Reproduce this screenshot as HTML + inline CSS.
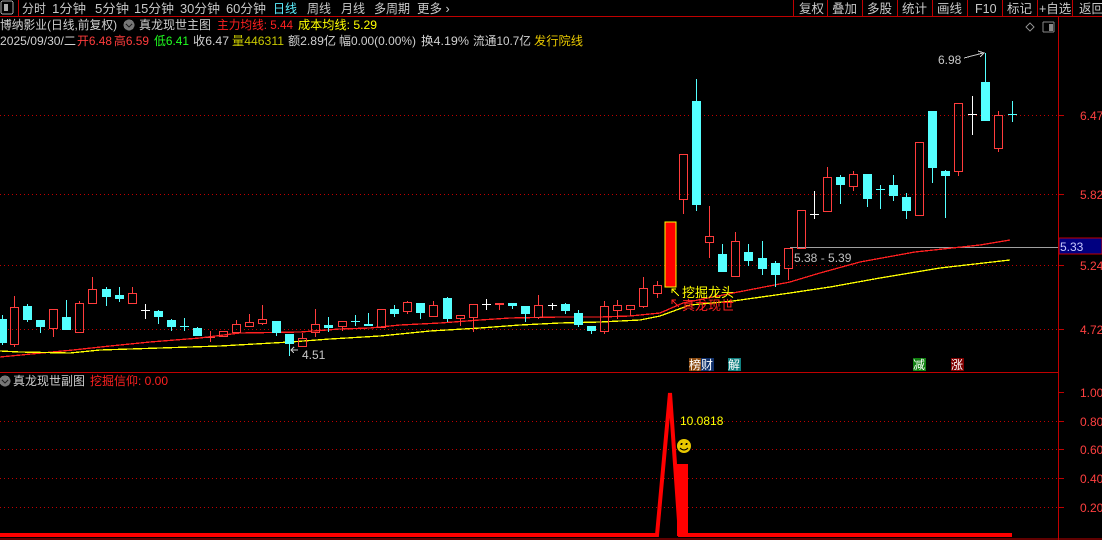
<!DOCTYPE html>
<html><head><meta charset="utf-8">
<style>
html,body{margin:0;padding:0;background:#000;width:1102px;height:540px;overflow:hidden}
svg{display:block}
text{font-family:"Liberation Sans","Noto Sans CJK SC",sans-serif}
</style></head><body>
<svg id="s" width="1102" height="540" xmlns="http://www.w3.org/2000/svg" shape-rendering="crispEdges">
<rect width="1102" height="540" fill="#000"/>
<!-- top menu -->
<line x1="0" y1="16.5" x2="1102" y2="16.5" stroke="#c00000"/>
<rect x="1" y="1" width="12" height="13" rx="2" fill="none" stroke="#aaa"/>
<rect x="4" y="4" width="4" height="7" fill="#aaa"/>
<line x1="18.5" y1="0" x2="18.5" y2="16" stroke="#c00000"/>
<g font-size="12.5" fill="#c8c8c8">
<text x="22" y="13" textLength="24" lengthAdjust="spacingAndGlyphs">分时</text><text x="52" y="13" textLength="34" lengthAdjust="spacingAndGlyphs">1分钟</text><text x="95" y="13" textLength="34" lengthAdjust="spacingAndGlyphs">5分钟</text>
<text x="134" y="13" textLength="40" lengthAdjust="spacingAndGlyphs">15分钟</text><text x="180" y="13" textLength="40" lengthAdjust="spacingAndGlyphs">30分钟</text><text x="226" y="13" textLength="40" lengthAdjust="spacingAndGlyphs">60分钟</text>
<text x="273" y="13" fill="#5cf0ff" textLength="24" lengthAdjust="spacingAndGlyphs">日线</text><text x="307" y="13" textLength="24" lengthAdjust="spacingAndGlyphs">周线</text><text x="341" y="13" textLength="24" lengthAdjust="spacingAndGlyphs">月线</text>
<text x="374" y="13" textLength="36" lengthAdjust="spacingAndGlyphs">多周期</text><text x="417" y="13">更多 ›</text>
<text x="799" y="13">复权</text><text x="832" y="13">叠加</text><text x="867" y="13">多股</text>
<text x="902" y="13">统计</text><text x="937" y="13">画线</text><text x="975" y="13">F10</text>
<text x="1007" y="13">标记</text><text x="1039" y="13">+自选</text><text x="1079" y="13">返回</text>
</g>
<g stroke="#c00000">
<line x1="793.5" y1="0" x2="793.5" y2="16"/><line x1="827.5" y1="0" x2="827.5" y2="16"/><line x1="862.5" y1="0" x2="862.5" y2="16"/><line x1="897.5" y1="0" x2="897.5" y2="16"/><line x1="932.5" y1="0" x2="932.5" y2="16"/><line x1="967.5" y1="0" x2="967.5" y2="16"/><line x1="1002.5" y1="0" x2="1002.5" y2="16"/><line x1="1037.5" y1="0" x2="1037.5" y2="16"/><line x1="1072.5" y1="0" x2="1072.5" y2="16"/>
</g>
<!-- header -->
<g font-size="12">
<text x="0" y="29" fill="#d0d0d0" textLength="117" lengthAdjust="spacingAndGlyphs">博纳影业(日线,前复权)</text>
<circle cx="129" cy="25" r="5.5" fill="#777"/><path d="M126 24l3 3 3-3" stroke="#222" fill="none"/>
<text x="139" y="29" fill="#d0d0d0" textLength="72" lengthAdjust="spacingAndGlyphs">真龙现世主图</text>
<text x="217" y="29" fill="#ff2020" textLength="76" lengthAdjust="spacingAndGlyphs">主力均线: 5.44</text>
<text x="298" y="29" fill="#ffff00" textLength="79" lengthAdjust="spacingAndGlyphs">成本均线: 5.29</text>
<text x="0" y="45" fill="#d0d0d0" textLength="76" lengthAdjust="spacingAndGlyphs">2025/09/30/二</text>
<text x="77" y="45" fill="#ff3c3c" textLength="35" lengthAdjust="spacingAndGlyphs">开6.48</text>
<text x="114" y="45" fill="#ff3c3c" textLength="35" lengthAdjust="spacingAndGlyphs">高6.59</text>
<text x="154" y="45" fill="#20ff20" textLength="35" lengthAdjust="spacingAndGlyphs">低6.41</text>
<text x="193" y="45" fill="#d0d0d0" textLength="36" lengthAdjust="spacingAndGlyphs">收6.47</text>
<text x="232" y="45" fill="#c8c800" textLength="52" lengthAdjust="spacingAndGlyphs">量446311</text>
<text x="288" y="45" fill="#d0d0d0" textLength="48" lengthAdjust="spacingAndGlyphs">额2.89亿</text>
<text x="339" y="45" fill="#d0d0d0" textLength="77" lengthAdjust="spacingAndGlyphs">幅0.00(0.00%)</text>
<text x="421" y="45" fill="#d0d0d0" textLength="48" lengthAdjust="spacingAndGlyphs">换4.19%</text>
<text x="473" y="45" fill="#d0d0d0" textLength="58" lengthAdjust="spacingAndGlyphs">流通10.7亿</text>
<text x="534" y="45" fill="#e8c800" textLength="49" lengthAdjust="spacingAndGlyphs">发行院线</text>
</g>
<path d="M1030 23l4 4-4 4-4-4z" fill="none" stroke="#888"/>
<rect x="1043" y="22" width="11" height="10" rx="1" fill="none" stroke="#888"/><rect x="1049" y="24" width="4" height="7" fill="#888"/>
<!-- axis lines -->
<line x1="1058.5" y1="17" x2="1058.5" y2="540" stroke="#c00000" stroke-width="1"/>
<line x1="0" y1="372.5" x2="1058" y2="372.5" stroke="#c00000"/>
<line x1="0" y1="539" x2="1102" y2="539" stroke="#c00000"/>
<g stroke="#c00000" stroke-dasharray="1 3">
<line x1="0" y1="115.5" x2="1058" y2="115.5"/><line x1="0" y1="194.5" x2="1058" y2="194.5"/>
<line x1="0" y1="265.5" x2="1058" y2="265.5"/><line x1="0" y1="329.5" x2="1058" y2="329.5"/>
<line x1="0" y1="421.5" x2="1058" y2="421.5"/><line x1="0" y1="449.5" x2="1058" y2="449.5"/>
<line x1="0" y1="478.5" x2="1058" y2="478.5"/><line x1="0" y1="507.5" x2="1058" y2="507.5"/>
</g>
<g stroke="#c00000"><line x1="1058" y1="115.5" x2="1064" y2="115.5"/><line x1="1058" y1="194.5" x2="1064" y2="194.5"/><line x1="1058" y1="265.5" x2="1064" y2="265.5"/><line x1="1058" y1="329.5" x2="1064" y2="329.5"/>
<line x1="1058" y1="392.5" x2="1064" y2="392.5"/><line x1="1058" y1="421.5" x2="1064" y2="421.5"/><line x1="1058" y1="449.5" x2="1064" y2="449.5"/><line x1="1058" y1="478.5" x2="1064" y2="478.5"/><line x1="1058" y1="507.5" x2="1064" y2="507.5"/></g>
<g font-size="12" fill="#ff4040">
<text x="1080" y="120">6.47</text><text x="1080" y="199">5.82</text><text x="1080" y="270">5.24</text><text x="1080" y="334">4.72</text>
<text x="1080" y="397">1.00</text><text x="1080" y="426">0.80</text><text x="1080" y="454">0.60</text><text x="1080" y="483">0.40</text><text x="1080" y="512">0.20</text>
</g>
<!-- 5.33 line -->
<line x1="790" y1="247.5" x2="1058" y2="247.5" stroke="#a0a0a0"/>
<rect x="1059" y="238" width="43" height="16" fill="#000080" stroke="#c00000"/>
<text x="1060" y="251" font-size="12" fill="#c8c8ff">5.33</text>
<text x="794" y="262" font-size="12" fill="#c0c0c0">5.38 - 5.39</text>
<!-- MA lines -->
<polyline fill="none" stroke="#ff2020" stroke-width="1.3" points="0,357 73,350 110,346 150,342 200,338 240,333 300,332 340,329 370,328 400,325 440,323 480,320 510,318 560,317 600,317 630,316 660,313 683,303 733,293 790,282 820,273 860,262 915,252 980,245 1010,240"/>
<polyline fill="none" stroke="#ffff00" stroke-width="1.3" points="0,351 20,352 70,353 100,350 160,348 220,346 290,342 330,339 380,336 430,331 480,328 520,325 560,323 600,322 640,320 660,316 690,305 733,301 790,293 830,287 880,278 940,268 1010,260"/>
<g id="c"></g>
<!-- annotations -->
<text x="938" y="64" font-size="12" fill="#c8c8c8">6.98</text>
<path d="M964 58 L983 53 M978 51 L984 53 L980 57" stroke="#c8c8c8" fill="none"/>
<path d="M298 350 L291 350 M294 347 L291 350 L294 353" stroke="#c8c8c8" fill="none"/>
<text x="302" y="359" font-size="12" fill="#c8c8c8">4.51</text>
<text x="682" y="297" font-size="13" fill="#ffff00">挖掘龙头</text>
<text x="682" y="310" font-size="13" fill="#ff2020">真龙现世</text>
<path d="M679 296 L672 289 M672 293 L672 289 L676 289" stroke="#ffff00" fill="none"/>
<path d="M679 307 L672 300 M672 304 L672 300 L676 300" stroke="#ff2020" fill="none"/>
<g font-size="12" fill="#fff">
<rect x="689" y="358" width="12" height="13" fill="#8b4a10"/><text x="689" y="369">榜</text>
<rect x="701" y="358" width="13" height="13" fill="#10306a"/><text x="701" y="369">财</text>
<rect x="728" y="358" width="13" height="13" fill="#108080"/><text x="728" y="369">解</text>
<rect x="913" y="358" width="13" height="13" fill="#108010"/><text x="913" y="369">减</text>
<rect x="951" y="358" width="13" height="13" fill="#800000"/><text x="951" y="369">涨</text>
</g>
<!-- sub header -->
<circle cx="5" cy="381" r="5.5" fill="#777"/><path d="M2 380l3 3 3-3" stroke="#222" fill="none"/>
<text x="13" y="385" font-size="12" fill="#d0d0d0" textLength="72" lengthAdjust="spacingAndGlyphs">真龙现世副图</text>
<text x="90" y="385" font-size="12" fill="#ff2020" textLength="78" lengthAdjust="spacingAndGlyphs">挖掘信仰: 0.00</text>
<!-- sub chart -->
<polyline fill="none" stroke="#ff0000" stroke-width="4" shape-rendering="auto" points="0,535 657,535 670,393 680,535 1012,535"/>
<rect x="677" y="464" width="11" height="72" fill="#ff0000"/>
<text x="680" y="425" font-size="12" fill="#ffff00">10.0818</text>
<circle cx="684" cy="446" r="7" fill="#e8c800" shape-rendering="auto"/>
<circle cx="681.5" cy="444" r="1" fill="#000"/><circle cx="686.5" cy="444" r="1" fill="#000"/>
<path d="M680 448 Q684 452 688 448" stroke="#000" fill="none" shape-rendering="auto"/>
</svg>
<script>
var D=[
[2,319,343,315,345,'c'],[14,307,344,296,347,'r'],[27,306,320,304,322,'c'],[40,320,327,320,333,'c'],[53,309,328,309,337,'r'],[66,317,330,300,330,'c'],[79,303,332,301,332,'r'],[92,289,303,277,303,'r'],[106,289,297,287,306,'c'],[119,295,299,287,302,'c'],[132,293,303,287,303,'r'],[145,310,310,304,319,'w'],[158,311,317,310,324,'c'],[171,320,327,319,331,'c'],[184,326,326,318,331,'x'],[197,328,336,327,336,'c'],[210,337,337,331,342,'q'],[223,331,336,331,336,'r'],[236,324,332,320,332,'r'],[249,322,326,314,326,'r'],[262,319,323,305,325,'r'],[276,321,333,321,336,'c'],[289,334,344,334,356,'c'],[302,338,346,333,347,'r'],[315,324,332,309,337,'r'],[328,325,328,317,332,'c'],[342,321,326,321,331,'r'],[355,321,321,315,326,'x'],[368,324,326,313,326,'c'],[381,309,327,309,327,'r'],[394,309,314,305,317,'c'],[407,302,311,301,314,'r'],[420,303,313,303,319,'c'],[433,305,316,301,316,'r'],[447,298,319,297,322,'c'],[460,315,318,315,326,'r'],[473,304,317,304,332,'r'],[486,304,304,299,310,'w'],[499,303,305,303,310,'f'],[512,303,306,303,309,'c'],[525,306,314,306,322,'c'],[538,305,317,295,319,'r'],[552,305,305,303,310,'w'],[565,304,311,303,314,'c'],[578,313,325,310,327,'c'],[591,326,331,326,334,'c'],[604,306,331,301,334,'r'],[617,305,310,300,319,'r'],[630,305,309,305,316,'r'],[643,288,306,277,308,'r'],[657,285,293,281,298,'r'],
[670,222,287,222,287,'F'],[683,154,199,154,214,'r'],[696,101,205,79,211,'c'],[709,236,242,206,258,'r'],[722,254,272,244,272,'c'],[735,241,276,232,276,'r'],[748,252,261,244,266,'c'],[762,258,269,241,275,'c'],[775,263,275,261,287,'c'],[788,248,268,248,280,'r'],[801,210,248,210,248,'r'],[814,214,214,191,219,'w'],[827,177,211,167,211,'r'],[840,177,185,175,204,'c'],[853,174,186,171,191,'r'],[867,174,199,174,207,'c'],[880,189,189,185,209,'x'],[893,185,196,175,201,'c'],[906,197,211,193,219,'c'],[919,142,215,142,215,'r'],[932,111,168,111,183,'c'],[945,171,176,170,218,'c'],[958,103,171,103,176,'r'],[972,114,114,96,135,'w'],[985,82,121,53,121,'c'],[998,115,148,111,152,'r'],[1012,114,114,101,122,'x']];
var h='';
D.forEach(function(d){var x=d[0],t=d[1],b=d[2],hi=d[3],lo=d[4],k=d[5];var wx=x+0.5;
if(k=='w'||k=='x'||k=='q'){var col=k=='w'?'#fff':k=='x'?'#54ffff':'#ff3c3c';
h+='<line x1="'+wx+'" y1="'+hi+'" x2="'+wx+'" y2="'+lo+'" stroke="'+col+'"/><line x1="'+(x-4)+'" y1="'+(t+0.5)+'" x2="'+(x+5)+'" y2="'+(t+0.5)+'" stroke="'+col+'"/>';return;}
if(k=='c'){h+='<line x1="'+wx+'" y1="'+hi+'" x2="'+wx+'" y2="'+lo+'" stroke="#54ffff"/><rect x="'+(x-4)+'" y="'+t+'" width="9" height="'+Math.max(2,b-t)+'" fill="#54ffff"/>';return;}
if(k=='F'){h+='<rect x="'+(x-5)+'" y="'+t+'" width="11" height="'+(b-t)+'" fill="#ff0000" stroke="#ffff00"/>';return;}
if(k=='f'){h+='<line x1="'+wx+'" y1="'+hi+'" x2="'+wx+'" y2="'+lo+'" stroke="#ff3c3c"/><rect x="'+(x-4)+'" y="'+t+'" width="9" height="'+Math.max(2,b-t)+'" fill="#ff3c3c"/>';return;}
if(hi<t)h+='<line x1="'+wx+'" y1="'+hi+'" x2="'+wx+'" y2="'+t+'" stroke="#ff3c3c"/>';
if(lo>b)h+='<line x1="'+wx+'" y1="'+b+'" x2="'+wx+'" y2="'+lo+'" stroke="#ff3c3c"/>';
h+='<rect x="'+(x-3.5)+'" y="'+(t+0.5)+'" width="8" height="'+Math.max(1,b-t)+'" fill="none" stroke="#ff3c3c"/>';});
document.getElementById('c').innerHTML=h;
</script>
</body></html>
